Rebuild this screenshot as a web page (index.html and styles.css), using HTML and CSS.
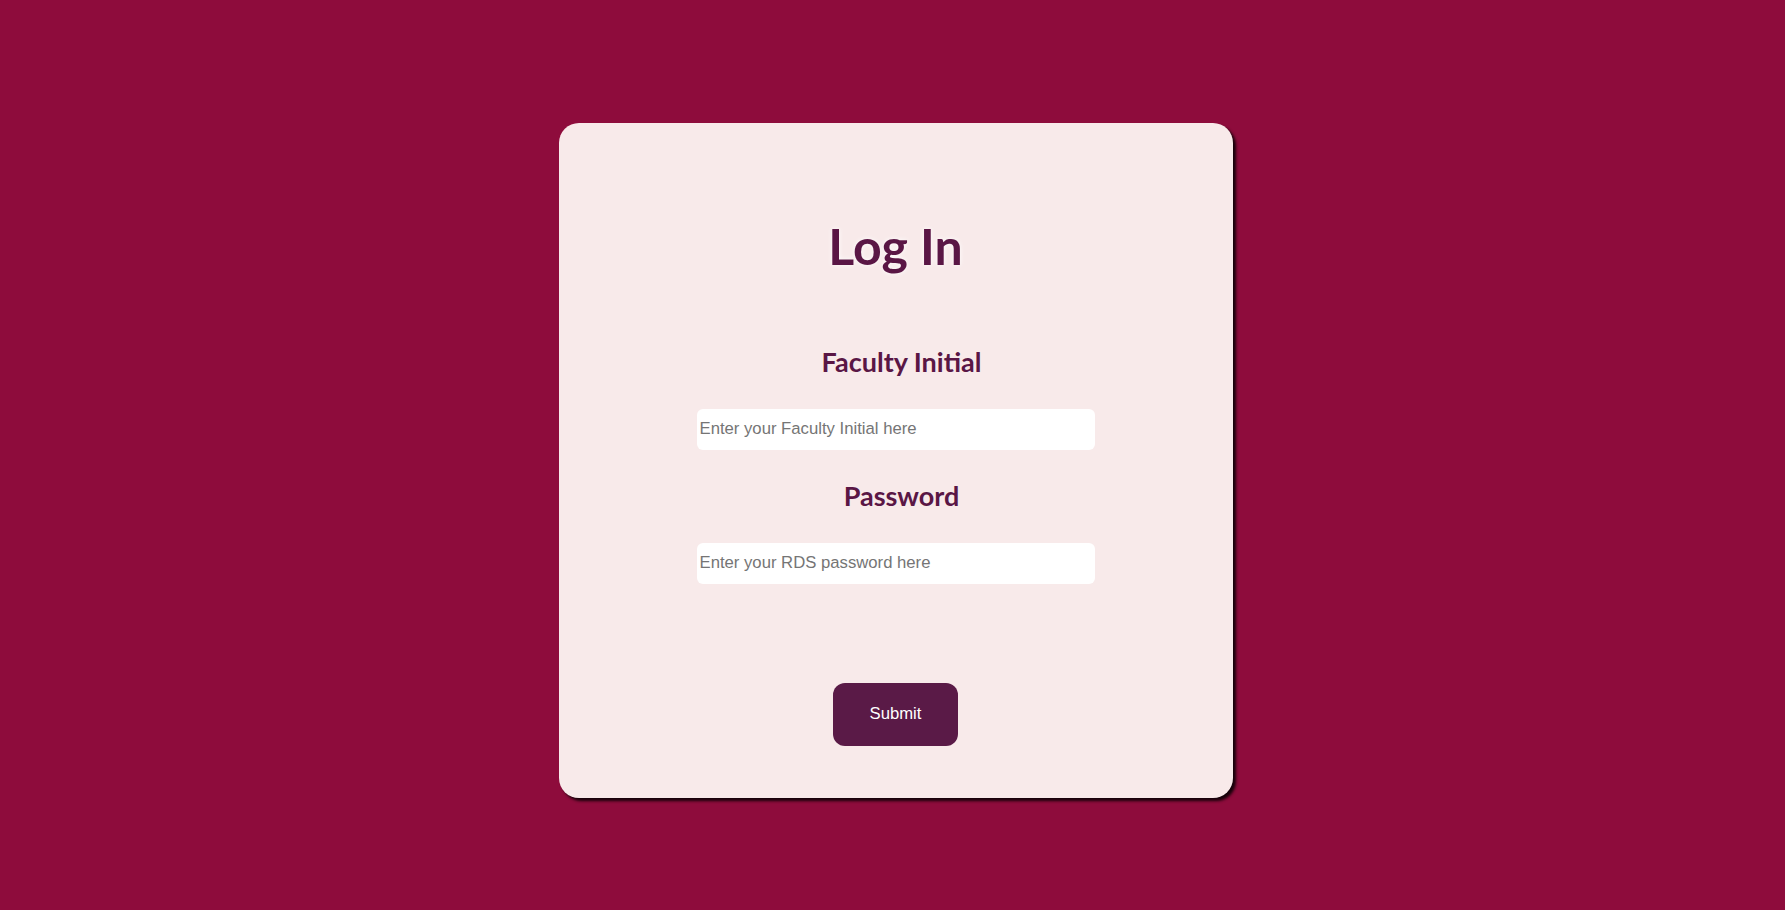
FILE: index.html
```html
<!DOCTYPE html>
<html lang="en">
<head>
<meta charset="utf-8">
<title>Log In</title>
<link rel="stylesheet" href="styles.css">
</head>
<body>
<main class="page">
  <form class="card">
    <h1 class="title">Log In</h1>
    <label class="label label-first" for="initial">Faculty Initial</label>
    <input class="field" id="initial" type="text" placeholder="Enter your Faculty Initial here">
    <label class="label label-second" for="password">Password</label>
    <input class="field" id="password" type="password" placeholder="Enter your RDS password here">
    <button class="submit" type="button">Submit</button>
  </form>
</main>
</body>
</html>
```

FILE: styles.css
```css
html, body {
  margin: 0;
  padding: 0;
}

body {
  background: #8e0c3c;
  font-family: "Lato", "Open Sans", sans-serif;
}

.page {
  box-sizing: border-box;
  min-height: 100vh;
  display: flex;
  align-items: center;
  justify-content: center;
  padding: 10px 0 0 6px;
}

.card {
  box-sizing: border-box;
  width: 674px;
  height: 675px;
  background: #f8eaea;
  border-radius: 20px;
  box-shadow: 3px 3px 3px rgba(0, 0, 0, 0.85);
  display: flex;
  flex-direction: column;
  align-items: center;
  padding: 98px 0 52px;
}

.title {
  margin: 0;
  font-size: 50px;
  line-height: 50px;
  height: 50px;
  font-weight: 700;
  color: #5a1645;
  text-shadow: 0 0 5px rgba(255, 255, 255, 0.95);
}

.label {
  display: block;
  font-size: 27px;
  line-height: 27px;
  height: 27px;
  font-weight: 700;
  color: #5a1645;
  padding-left: 12px;
}

.label-first {
  margin-top: 77px;
}

.label-second {
  margin-top: 32px;
}

.field {
  box-sizing: border-box;
  display: block;
  width: 398px;
  height: 41px;
  margin-top: 34px;
  border: none;
  border-radius: 6px;
  background: #ffffff;
  padding: 0 3px;
  font-family: "Liberation Sans", Arial, sans-serif;
  font-size: 16.7px;
  color: #222;
  outline: none;
}

.field::placeholder {
  color: #757575;
  opacity: 1;
}

.submit {
  box-sizing: border-box;
  width: 125px;
  height: 63px;
  margin-top: 99px;
  border: none;
  border-radius: 12px;
  background: #5a1a47;
  color: #ffffff;
  font-family: "Liberation Sans", Arial, sans-serif;
  font-size: 16.7px;
  cursor: pointer;
}
```
